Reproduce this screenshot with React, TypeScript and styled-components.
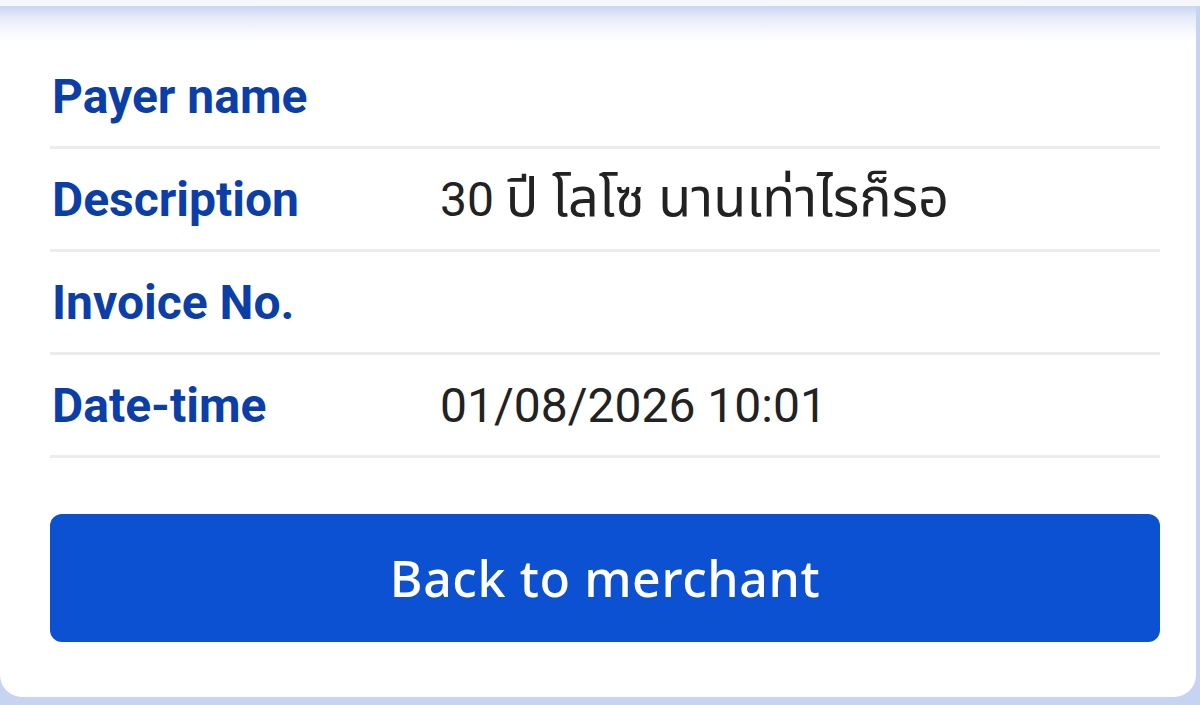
import React from "react";
import styled, { createGlobalStyle } from "styled-components";

const Global = createGlobalStyle`
  html, body { margin: 0; padding: 0; }
  body {
    width: 1200px;
    height: 705px;
    overflow: hidden;
    background: #f6f7f9;
    font-family: Roboto, "Noto Sans", "Noto Sans Thai", sans-serif;
  }
`;

const Page = styled.div`
  width: 1200px;
  height: 705px;
  display: flex;
  flex-direction: column;
  background: linear-gradient(to bottom, #f6f7f9 0px, #f6f7f9 6px, #c6d3f1 6px, #c6d3f1 100%);
`;

const Card = styled.div`
  margin-top: 6px;
  margin-right: 4px;
  height: 691px;
  box-sizing: border-box;
  border-radius: 0 0 22px 22px;
  background: linear-gradient(to bottom, #c8d5f3 0px, #e6ecfa 12px, #f7f9fe 26px, #ffffff 36px);
  padding: 40px 36px 0 50px;
  display: flex;
  flex-direction: column;
`;

const Rows = styled.div`
  display: flex;
  flex-direction: column;
`;

const Row = styled.div`
  height: 100px;
  display: flex;
  align-items: center;
  border-bottom: 3px solid #ececec;
`;

const Label = styled.div`
  width: 388px;
  padding-left: 2px;
  font-family: Roboto, sans-serif;
  font-weight: 700;
  font-size: 48px;
  color: #0b3fa7;
  white-space: nowrap;
`;

const Value = styled.div`
  font-family: Roboto, "Noto Sans Thai", "Noto Sans", sans-serif;
  font-weight: 400;
  font-size: 48px;
  color: #222222;
  white-space: nowrap;
`;

const Thai = styled.span`
  font-size: 54px;
  line-height: 1;
`;

const BackButton = styled.button`
  margin-top: 56px;
  height: 128px;
  border: none;
  border-radius: 12px;
  background: #0c51d1;
  color: #ffffff;
  font-family: "Noto Sans", sans-serif;
  font-weight: 500;
  font-size: 50px;
  letter-spacing: 0.6px;
  cursor: pointer;
  display: flex;
  align-items: center;
  justify-content: center;
  padding: 0;
`;

type RowData = { label: string; value?: React.ReactNode };

const rows: RowData[] = [
  { label: "Payer name" },
  {
    label: "Description",
    value: (
      <>
        30 <Thai>ปี โลโซ นานเท่าไรก็รอ</Thai>
      </>
    ),
  },
  { label: "Invoice No." },
  { label: "Date-time", value: "01/08/2026 10:01" },
];

export default function App() {
  return (
    <>
      <Global />
      <Page>
        <Card>
          <Rows>
            {rows.map((r) => (
              <Row key={r.label}>
                <Label>{r.label}</Label>
                {r.value && <Value>{r.value}</Value>}
              </Row>
            ))}
          </Rows>
          <BackButton>Back to merchant</BackButton>
        </Card>
      </Page>
    </>
  );
}
